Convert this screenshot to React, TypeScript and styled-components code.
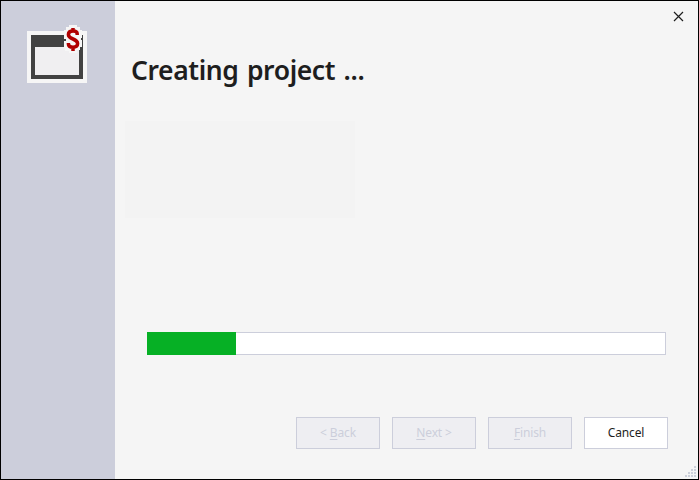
import React from "react";
import styled, { createGlobalStyle } from "styled-components";

const GlobalStyle = createGlobalStyle`
  *, *::before, *::after { box-sizing: border-box; }
  body { margin: 0; font-family: "Noto Sans", "Open Sans", sans-serif; }
`;

const Dialog = styled.div`
  position: relative;
  display: grid;
  grid-template-columns: 114px 1fr;
  width: 699px;
  height: 480px;
  border: 1px solid #000;
  background: #f5f5f5;
  overflow: hidden;
`;

const Sidebar = styled.aside`
  background: #cccedb;
  padding: 24px 0 0 26px;
`;

const ProjectIcon = styled.svg`
  display: block;
`;

const Main = styled.main`
  display: flex;
  flex-direction: column;
`;

const TitleBar = styled.header`
  display: flex;
  justify-content: flex-end;
  height: 30px;
  padding: 10px 14px 0 0;
`;

const CloseButton = styled.button`
  display: block;
  width: 11px;
  height: 11px;
  padding: 0;
  border: 0;
  background: none;

  svg { display: block; }
`;

const Title = styled.h1`
  height: 40px;
  margin: 19px 0 0 16px;
  font-size: 26.5px;
  line-height: 40px;
  font-weight: 600;
  letter-spacing: -0.4px;
  word-spacing: 2px;
  color: #1e1e1e;
  white-space: nowrap;
`;

const MessageArea = styled.div`
  width: 230px;
  height: 97px;
  margin: 31px 0 0 10px;
  background: #f3f3f3;
`;

const ProgressTrack = styled.div`
  width: 519px;
  height: 23px;
  margin: 114px 0 0 32px;
  background: #fff;
  border: 1px solid #cccedb;
`;

const ProgressFill = styled.div`
  width: 89px;
  height: 23px;
  margin: -1px 0 0 -1px;
  background: #06b025;
`;

const Actions = styled.footer`
  display: flex;
  justify-content: flex-end;
  gap: 12px;
  margin-top: 62px;
  padding-right: 30px;
`;

const ActionButton = styled.button`
  width: 84px;
  height: 32px;
  padding: 0;
  border: 1px solid #cccedb;
  background: #fff;
  color: #1e1e1e;
  font-family: inherit;
  font-size: 12px;
  line-height: 30px;
  letter-spacing: -0.15px;

  &:disabled {
    background: #eeeef2;
    color: #cccedb;
  }
`;

const AccessKey = styled.span`
  text-decoration: underline;
  text-decoration-thickness: 1px;
  text-underline-offset: 2px;
`;

const ResizeGrip = styled.svg`
  position: absolute;
  right: 2px;
  bottom: 2px;
`;

const gripDots = [0, 1, 2, 3].flatMap((row) =>
  Array.from({ length: row + 1 }, (_, i) => ({ x: 9 - i * 3, y: row * 3 }))
);

export default function App() {
  return (
    <>
      <GlobalStyle />
      <Dialog>
        <Sidebar>
          <ProjectIcon width="60" height="60" viewBox="0 0 60 60" shapeRendering="crispEdges">
            <path fill="#f6f6f6" d="M0 6H60V58H0Z" />
            <path fill="#424242" d="M4 10H56V54H4Z" />
            <path fill="#f0eff1" d="M8 22H52V50H8Z" />
            <path
              fill="#f6f6f6"
              d="M42 0H50V2H53V5H55V13H54V15H55V22H53V25H50V28H42V26H38V23H37V16H39V14H37V5H39V2H42Z"
            />
            <path
              shapeRendering="auto"
              fill="none"
              stroke="#b00000"
              strokeWidth="3.5"
              d="M50.2 10V8.8Q50.2 6 46 6Q41.4 6 41.4 9.4Q41.4 12.2 46 14Q50.6 15.8 50.6 18.6Q50.6 22.2 46 22.2Q41.4 22.2 41.4 19V18M46 3V6.5M46 21.5V26"
            />
          </ProjectIcon>
        </Sidebar>
        <Main>
          <TitleBar>
            <CloseButton aria-label="Close">
              <svg width="11" height="11" viewBox="0 0 11 11">
                <path d="M1 1L10 10M10 1L1 10" fill="none" stroke="#1e1e1e" strokeWidth="1.2" />
              </svg>
            </CloseButton>
          </TitleBar>
          <Title>Creating project ...</Title>
          <MessageArea />
          <ProgressTrack role="progressbar">
            <ProgressFill />
          </ProgressTrack>
          <Actions>
            <ActionButton disabled>&lt; <AccessKey>B</AccessKey>ack</ActionButton>
            <ActionButton disabled><AccessKey>N</AccessKey>ext &gt;</ActionButton>
            <ActionButton disabled><AccessKey>F</AccessKey>inish</ActionButton>
            <ActionButton>Cancel</ActionButton>
          </Actions>
        </Main>
        <ResizeGrip width="11" height="11" viewBox="0 0 11 11" shapeRendering="crispEdges">
          {gripDots.map(({ x, y }) => (
            <rect key={`${x}-${y}`} x={x} y={y} width="2" height="2" fill="#ccd0da" />
          ))}
        </ResizeGrip>
      </Dialog>
    </>
  );
}
